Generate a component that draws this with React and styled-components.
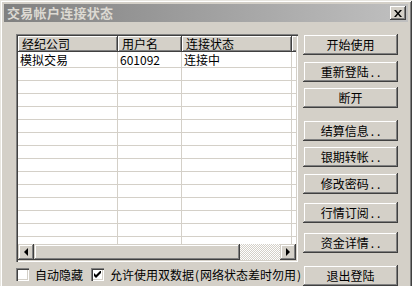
import React from "react";
import styled, { createGlobalStyle } from "styled-components";

const FONT = `"Noto Sans CJK SC", "Liberation Sans", sans-serif`;

const COLUMNS = [
  { id: "broker", name: "经纪公司", width: 100 },
  { id: "user", name: "用户名", width: 64 },
  { id: "state", name: "连接状态", width: 110 },
];

const ROWS = [{ id: 1, broker: "模拟交易", user: "601092", state: "连接中" }];
const EMPTY_ROWS = 14;

const BUTTONS = [
  { id: "start", name: "开始使用", gap: 0 },
  { id: "relogin", name: "重新登陆", more: true, gap: 6 },
  { id: "off", name: "断开", gap: 5 },
  { id: "settle", name: "结算信息", more: true, gap: 12 },
  { id: "bank", name: "银期转帐", more: true, gap: 5 },
  { id: "pwd", name: "修改密码", more: true, gap: 6 },
  { id: "quote", name: "行情订阅", more: true, gap: 8 },
  { id: "fund", name: "资金详情", more: true, gap: 9 },
  { id: "logout", name: "退出登陆", gap: 12 },
];

const App = () => {
  return (
    <>
      <GlobalStyle />
      <Window>
        <TitleBar>
          <span>交易帐户连接状态</span>
          <CloseButton>
            <svg width="8" height="7" viewBox="0 0 8 7">
              <path d="M0 0h2l2 2.5L6 0h2L5 3.5 8 7H6L4 4.5 2 7H0l3-3.5z" fill="#000" />
            </svg>
          </CloseButton>
        </TitleBar>
        <Body>
          <LeftColumn>
            <ListView>
              <Header>
                {COLUMNS.map((col) => (
                  <HeaderCell key={col.id} width={col.width}>
                    {col.name}
                  </HeaderCell>
                ))}
                <HeaderRest />
              </Header>
              <Rows>
                {ROWS.map((row) => (
                  <Row key={row.id} first>
                    {COLUMNS.map((col) => (
                      <Cell key={col.id} width={col.width}>
                        {row[col.id]}
                      </Cell>
                    ))}
                  </Row>
                ))}
                {Array.from({ length: EMPTY_ROWS }).map((_, i) => (
                  <Row key={"e" + i}>
                    {COLUMNS.map((col) => (
                      <Cell key={col.id} width={col.width} />
                    ))}
                  </Row>
                ))}
              </Rows>
              <ScrollBar>
                <ArrowButton>
                  <Arrow dir="left" />
                </ArrowButton>
                <Thumb />
                <Track />
                <ArrowButton>
                  <Arrow dir="right" />
                </ArrowButton>
              </ScrollBar>
            </ListView>
            <Options>
              <CheckLabel>
                <CheckBox />
                <span>自动隐藏</span>
              </CheckLabel>
              <CheckLabel>
                <CheckBox>
                  <svg width="7" height="7" viewBox="0 0 7 7">
                    <path d="M0 2v3l2 2 5-5V-1L2 4z" fill="#000" />
                  </svg>
                </CheckBox>
                <span>
                  允许使用双数据<Paren>(</Paren>网络状态差时勿用<Paren>)</Paren>
                </span>
              </CheckLabel>
            </Options>
          </LeftColumn>
          <ButtonColumn>
            {BUTTONS.map((b) => (
              <Button key={b.id} gap={b.gap}>
                {b.name}
                {b.more && <Dots>..</Dots>}
              </Button>
            ))}
          </ButtonColumn>
        </Body>
      </Window>
    </>
  );
};

const GlobalStyle = createGlobalStyle`
  body {
    margin: 0;
    background: #d4d0c8;
    overflow: hidden;
    font-family: ${FONT};
  }
`;

const Window = styled.div`
  width: 412px;
  height: 300px;
  box-sizing: border-box;
  padding: 4px 4px 0 4px;
  background: #d4d0c8;
  box-shadow: inset 1px 1px #e8e6e0, inset -1px -1px #404040, inset 2px 2px #fff,
    inset -2px -2px #808080;
`;

const TitleBar = styled.div`
  display: flex;
  align-items: center;
  justify-content: space-between;
  height: 18px;
  padding: 0 2px 0 3px;
  background: linear-gradient(to right, #808080, #c0c0c0);
  color: #dcd9d2;
  font-size: 13px;
  font-weight: bold;
  letter-spacing: 0.3px;
  line-height: 18px;
`;

const CloseButton = styled.div`
  display: flex;
  align-items: center;
  justify-content: center;
  width: 16px;
  height: 14px;
  box-sizing: border-box;
  background: #d4d0c8;
  box-shadow: inset -1px -1px #404040, inset 1px 1px #fff, inset -2px -2px #808080;
`;

const Body = styled.div`
  display: flex;
  gap: 5px;
  padding: 12px 0 0 12px;
`;

const LeftColumn = styled.div`
  display: flex;
  flex-direction: column;
  width: 282px;
`;

const ListView = styled.div`
  display: flex;
  flex-direction: column;
  height: 228px;
  box-sizing: border-box;
  padding: 2px;
  background: #fff;
  box-shadow: inset 1px 1px #808080, inset 2px 2px #404040, inset -1px -1px #fff,
    inset -2px -2px #d4d0c8;
  overflow: hidden;
`;

const Header = styled.div`
  display: flex;
  height: 16px;
  flex-shrink: 0;
  background: #d4d0c8;
`;

const HeaderCell = styled.div`
  width: ${(p) => p.width}px;
  box-sizing: border-box;
  padding-left: 4px;
  font-size: 12px;
  line-height: 15px;
  color: #000;
  box-shadow: inset 1px 1px #fff, inset -1px -1px #808080;
  border-right: 1px solid #404040;
  border-bottom: 1px solid #404040;
  white-space: nowrap;
`;

const HeaderRest = styled.div`
  flex: 1;
  box-shadow: inset 1px 1px #fff, inset 0 -1px #808080;
  border-bottom: 1px solid #404040;
`;

const Rows = styled.div`
  flex: 1;
  overflow: hidden;
`;

const Row = styled.div`
  display: flex;
  height: ${(p) => (p.first ? 16 : 13)}px;
  box-sizing: border-box;
  border-bottom: 1px solid #d4d0c8;
`;

const Cell = styled.div`
  width: ${(p) => p.width}px;
  box-sizing: border-box;
  padding-left: 2px;
  border-right: 1px solid #d4d0c8;
  font-size: 12px;
  line-height: 15px;
  color: #000;
  white-space: nowrap;
`;

const ScrollBar = styled.div`
  display: flex;
  height: 16px;
  flex-shrink: 0;
`;

const raised = `
  box-sizing: border-box;
  background: #d4d0c8;
  box-shadow: inset -1px -1px #404040, inset 1px 1px #d4d0c8, inset -2px -2px #808080,
    inset 2px 2px #fff;
`;

const ArrowButton = styled.div`
  ${raised}
  display: flex;
  align-items: center;
  justify-content: center;
  width: 16px;
  height: 16px;
`;

const Arrow = styled.span`
  width: 0;
  height: 0;
  border-top: 4px solid transparent;
  border-bottom: 4px solid transparent;
  ${(p) => (p.dir === "left" ? "border-right: 4px solid #000;" : "border-left: 4px solid #000;")}
`;

const Thumb = styled.div`
  ${raised}
  width: 206px;
  height: 16px;
`;

const Track = styled.div`
  flex: 1;
  height: 16px;
  background-color: #fff;
  background-image: repeating-conic-gradient(#d4d0c8 0 25%, #fff 0 50%);
  background-size: 2px 2px;
`;

const Options = styled.div`
  display: flex;
  align-items: center;
  gap: 8px;
  margin-top: 5px;
  height: 14px;
`;

const CheckLabel = styled.label`
  display: flex;
  align-items: center;
  gap: 6px;
  font-size: 12px;
  line-height: 13px;
  color: #000;
  white-space: nowrap;
`;

const Paren = styled.span`
  margin: 0 1px;
`;

const CheckBox = styled.span`
  display: flex;
  align-items: center;
  justify-content: center;
  width: 13px;
  height: 13px;
  box-sizing: border-box;
  background: #fff;
  box-shadow: inset 1px 1px #808080, inset 2px 2px #404040, inset -1px -1px #fff,
    inset -2px -2px #d4d0c8;
`;

const ButtonColumn = styled.div`
  display: flex;
  flex-direction: column;
  width: 95px;
`;

const Button = styled.div`
  ${raised}
  display: flex;
  align-items: center;
  justify-content: center;
  height: 21px;
  margin-top: ${(p) => p.gap}px;
  font-size: 12px;
  color: #000;
  white-space: nowrap;
`;

const Dots = styled.span`
  margin-left: 2px;
  letter-spacing: 3px;
  margin-right: -3px;
`;

export default App;
